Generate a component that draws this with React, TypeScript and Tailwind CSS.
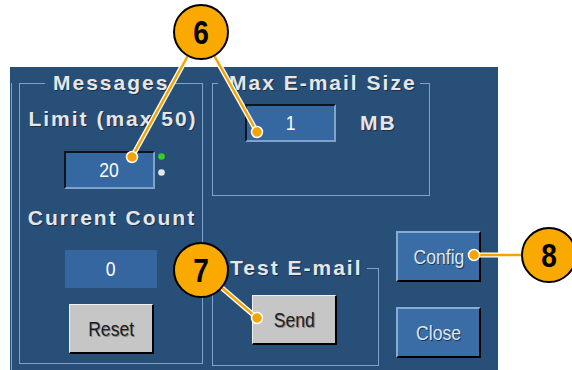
const label =
  "font-['Liberation_Sans',Arial,sans-serif] font-bold text-[21px] leading-[22px] tracking-[2px] text-[#e6e6e6] [text-shadow:1px_1px_0_#16304d]"
const btnText = "font-['Liberation_Sans',Arial,sans-serif] text-[20px] leading-none inline-block scale-x-[0.88]"

function Callouts() {
  const line = (x1: number, y1: number, x2: number, y2: number) => (
    <g>
      <line x1={x1} y1={y1} x2={x2} y2={y2} stroke="#ffffff" strokeWidth={5} />
      <line x1={x1} y1={y1} x2={x2} y2={y2} stroke="#f5a300" strokeWidth={2.5} />
      <circle cx={x2} cy={y2} r={5.5} fill="#f5a300" stroke="#ffffff" strokeWidth={1.5} />
    </g>
  )
  const badge = (cx: number, cy: number, n: string) => (
    <g>
      <circle cx={cx} cy={cy} r={27} fill="#f9a900" stroke="#000000" strokeWidth={2} />
      <text
        x={0}
        y={0}
        transform={`translate(${cx} ${cy + 12}) scale(0.85 1)`}
        textAnchor="middle"
        fontFamily="Liberation Sans, Arial, sans-serif"
        fontWeight="bold"
        fontSize={33}
        fill="#000000"
      >
        {n}
      </text>
    </g>
  )
  return (
    <svg className="absolute inset-0 pointer-events-none" width={572} height={370} viewBox="0 0 572 370">
      {line(201, 32, 132, 157)}
      {line(201, 32, 257, 132)}
      {line(201, 270, 257, 318)}
      {line(549, 255, 474, 255)}
      {badge(201, 32, '6')}
      {badge(201, 270, '7')}
      {badge(549, 255, '8')}
    </svg>
  )
}

function GrayButton({ text }: { text: string }) {
  return (
    <button className="w-[85px] h-[50px] bg-[#c6c6c6] border-t border-l border-t-[#f0f0f0] border-l-[#f0f0f0] border-b-2 border-r-2 border-b-black border-r-black flex items-center justify-center">
      <span className={`${btnText} text-[#1e1e1e] [text-shadow:1px_1px_0_#8a8a8a]`}>{text}</span>
    </button>
  )
}

function BlueButton({ text }: { text: string }) {
  return (
    <button className="w-[85px] h-[51px] bg-[#3a6da6] border-t-2 border-l-2 border-t-[#86abd4] border-l-[#86abd4] border-b-2 border-r-2 border-b-black border-r-black flex items-center justify-center">
      <span className={`${btnText} text-[#dfe6ee] [text-shadow:1px_1px_0_#1c3554]`}>{text}</span>
    </button>
  )
}

function Field({ value }: { value: string }) {
  return (
    <div className="w-[91px] h-[38px] bg-[#3567a0] border-t-2 border-l-2 border-t-[#0c1420] border-l-[#0c1420] border-b-2 border-r-2 border-b-[#7fa3cc] border-r-[#7fa3cc] flex items-center justify-center">
      <span className={`${btnText} text-white`}>{value}</span>
    </div>
  )
}

export default function App() {
  return (
    <div className="relative w-[572px] h-[370px] bg-white overflow-hidden">
      <div className="ml-[10px] mt-[67px] w-[488px] h-[303px] bg-[#284f77] flex items-start">
        <div className="ml-[1px] mt-[16px] w-px h-[287px] bg-[#7fa3cc]" />

        {/* Messages */}
        <fieldset className="ml-[7px] mt-[5px] w-[184px] h-[292px] border border-[#7fa3cc] flex flex-col">
          <legend className={`${label} ml-[25px] pl-[8px] pr-[1px]`}>Messages</legend>
          <div className={`${label} mt-[14px] w-full text-center pl-[4px]`}>Limit (max 50)</div>
          <div className="mt-[21px] ml-[44px] flex items-start gap-[3px]">
            <Field value="20" />
            <div className="flex flex-col gap-[9px] mt-[2px]">
              <svg width="7" height="7" viewBox="0 0 7 7">
                <circle cx="3.5" cy="3.5" r="3.3" fill="#35d020" />
              </svg>
              <svg width="7" height="7" viewBox="0 0 7 7">
                <circle cx="3.5" cy="3.5" r="3.3" fill="#e8e8e8" />
              </svg>
            </div>
          </div>
          <div className={`${label} mt-[18px] w-full text-center pl-[2px]`}>Current Count</div>
          <div className="mt-[21px] ml-[45px] w-[92px] h-[38px] bg-[#3566a0] flex items-center justify-center">
            <span className={`${btnText} text-white`}>0</span>
          </div>
          <div className="mt-[16px] ml-[49px]">
            <GrayButton text="Reset" />
          </div>
        </fieldset>

        <div className="ml-[9px] flex flex-col">
          {/* Max E-mail Size */}
          <fieldset className="mt-[5px] w-[218px] h-[124px] border border-[#7fa3cc] flex flex-col">
            <legend className={`${label} ml-[5px] pl-[11px] pr-[3px]`}>Max E-mail Size</legend>
            <div className="mt-[10px] ml-[32px] flex items-center gap-[24px]">
              <Field value="1" />
              <span className={`${label} tracking-[1px]`}>MB</span>
            </div>
          </fieldset>

          <div className="flex items-start">
            {/* Test E-mail */}
            <fieldset className="mt-[61px] w-[167px] h-[109px] border border-[#7fa3cc] flex flex-col">
              <legend className={`${label} ml-[5px] pl-[12px] pr-[5px]`}>Test E-mail</legend>
              <div className="mt-[16px] ml-[39px]">
                <GrayButton text="Send" />
              </div>
            </fieldset>

            <div className="ml-[17px] mt-[35px] flex flex-col gap-[25px]">
              <BlueButton text="Config" />
              <BlueButton text="Close" />
            </div>
          </div>
        </div>
      </div>
      <Callouts />
    </div>
  )
}
